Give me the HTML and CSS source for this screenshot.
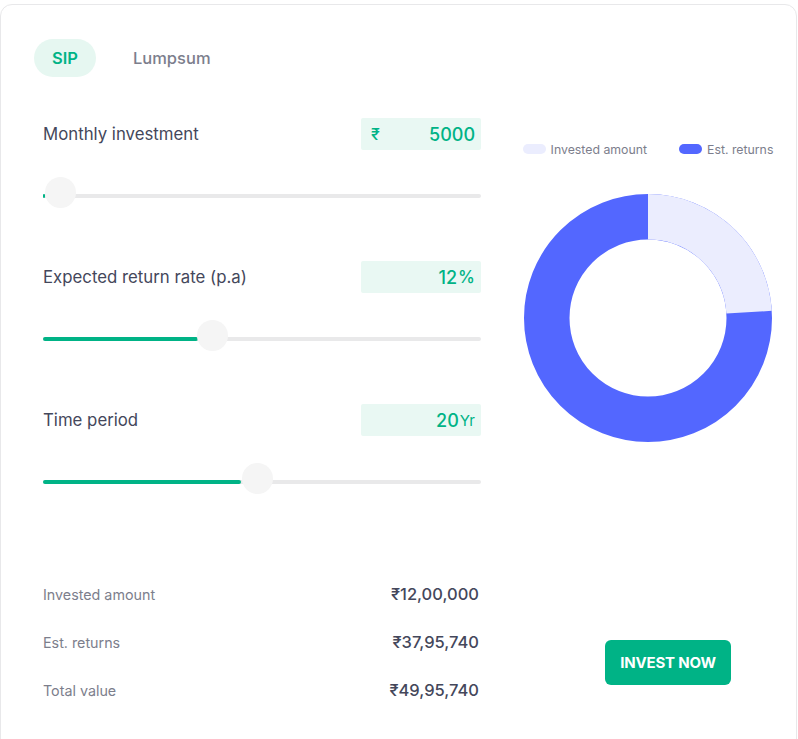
FILE: index.html
```html
<!DOCTYPE html>
<html>
<head>
<meta charset="utf-8">
<title>SIP Calculator</title>
<link rel="stylesheet" href="styles.css">
</head>
<body>
  <div class="card">
    <div class="tabs">
      <div class="tab tab-active">SIP</div>
      <div class="tab">Lumpsum</div>
    </div>

    <div class="main">
      <div class="left-column">
        <div class="group">
          <div class="group-head">
            <span class="label">Monthly investment</span>
            <div class="value-box value-money"><span class="unit-pre">₹</span><span class="num">5000</span></div>
          </div>
          <div class="slider">
            <div class="track"></div>
            <div class="fill" style="width: 2px"></div>
            <div class="thumb" style="left: 2px"></div>
          </div>
        </div>

        <div class="group">
          <div class="group-head">
            <span class="label">Expected return rate (p.a)</span>
            <div class="value-box"><span class="num">12</span><span class="unit">%</span></div>
          </div>
          <div class="slider">
            <div class="track"></div>
            <div class="fill" style="width: 155px"></div>
            <div class="thumb" style="left: 154px"></div>
          </div>
        </div>

        <div class="group">
          <div class="group-head">
            <span class="label">Time period</span>
            <div class="value-box"><span class="num">20</span><span class="unit unit-yr">Yr</span></div>
          </div>
          <div class="slider">
            <div class="track"></div>
            <div class="fill" style="width: 198px"></div>
            <div class="thumb" style="left: 199px"></div>
          </div>
        </div>

        <div class="results">
          <div class="result-row">
            <span class="result-label">Invested amount</span>
            <span class="result-value">₹12,00,000</span>
          </div>
          <div class="result-row">
            <span class="result-label">Est. returns</span>
            <span class="result-value">₹37,95,740</span>
          </div>
          <div class="result-row">
            <span class="result-label">Total value</span>
            <span class="result-value">₹49,95,740</span>
          </div>
        </div>
      </div>

      <div class="right-column">
        <div class="legend">
          <div class="legend-item"><span class="swatch swatch-light"></span>Invested amount</div>
          <div class="legend-item"><span class="swatch swatch-blue"></span>Est. returns</div>
        </div>
        <svg class="donut" width="248" height="248" viewBox="0 0 248 248">
          <circle cx="124" cy="124" r="101.25" fill="none" stroke="#5367ff" stroke-width="45.5"/>
          <circle cx="124" cy="124" r="101.25" fill="none" stroke="#ebedfe" stroke-width="45.5"
                  stroke-dasharray="152.8 636.2" transform="rotate(-90 124 124)"/>
        </svg>
        <button class="invest-btn">INVEST NOW</button>
      </div>
    </div>
  </div>
</body>
</html>
```

FILE: styles.css
```css
* {
  box-sizing: border-box;
  font-family: Inter, "Noto Sans", sans-serif;
}
html, body {
  height: 100%;
}
body {
  margin: 0;
  background: #fff;
  overflow: hidden;
}

.card {
  margin: 4px 1px 0 0;
  min-height: 760px;
  border: 1px solid #e8e8ea;
  border-radius: 12px;
  padding: 34px 0 0 33px;
}

.tabs {
  display: flex;
  gap: 20px;
}
.tab {
  height: 38px;
  padding: 0 17px;
  border-radius: 19px;
  display: flex;
  align-items: center;
  font-size: 16.5px;
  font-weight: 500;
  color: #7c7e8c;
}
.tab-active {
  padding: 0 18px;
  background: #e6f7f1;
  color: #00b386;
  font-weight: 600;
}

.main {
  display: flex;
}
.left-column {
  width: 438px;
  margin: 41px 0 0 9px;
}
.right-column {
  flex: 1;
  margin-left: 19px;
  display: flex;
  flex-direction: column;
  align-items: center;
}

.group {
  margin-bottom: 52px;
}
.group-head {
  display: flex;
  justify-content: space-between;
  align-items: center;
  height: 32px;
}
.label {
  font-size: 16.8px;
  color: #44475b;
}
.value-box {
  width: 120px;
  height: 32px;
  background: #e9f8f3;
  border-radius: 2px;
  display: flex;
  align-items: center;
  justify-content: flex-end;
  padding: 0 6px 0 10px;
  color: #00b386;
  font-size: 18px;
  font-weight: 500;
}
.value-money {
  justify-content: space-between;
}
.unit-pre {
  font-size: 16px;
}
.unit {
  margin-left: 1px;
  font-size: 17px;
}
.unit-yr {
  font-size: 15px;
  font-weight: 400;
}

.slider {
  position: relative;
  height: 32px;
  margin-top: 27px;
}
.track {
  position: absolute;
  left: 0;
  right: 0;
  top: 17px;
  height: 4px;
  background: #e9e9ea;
  border-radius: 2px;
}
.fill {
  position: absolute;
  left: 0;
  top: 17px;
  height: 4px;
  background: #00b386;
  border-radius: 2px;
}
.thumb {
  position: absolute;
  top: 0;
  width: 31px;
  height: 31px;
  border-radius: 50%;
  background: #f5f5f5;
}

.results {
  margin-top: 87px;
}
.result-row {
  display: flex;
  justify-content: space-between;
  align-items: center;
  height: 24px;
  padding-right: 2px;
  margin-bottom: 24px;
}
.result-label {
  font-size: 14.3px;
  color: #7c7e8c;
}
.result-value {
  font-size: 16.5px;
  font-weight: 500;
  color: #44475b;
}

.legend {
  margin-top: 64px;
  display: flex;
  gap: 32px;
  height: 16px;
  align-items: center;
}
.legend-item {
  display: flex;
  align-items: center;
  font-size: 12.3px;
  color: #7c7e8c;
}
.swatch {
  display: inline-block;
  width: 23px;
  height: 10px;
  border-radius: 5px;
  margin-right: 5px;
}
.swatch-light {
  background: #ebedfe;
}
.swatch-blue {
  background: #5367ff;
}

.donut {
  margin-top: 37px;
  display: block;
}

.invest-btn {
  margin: 198px 0 0 40px;
  width: 126px;
  height: 45px;
  border: none;
  border-radius: 6px;
  background: #00b386;
  color: #fff;
  font-size: 15px;
  font-weight: 700;
  letter-spacing: -0.2px;
}
```
